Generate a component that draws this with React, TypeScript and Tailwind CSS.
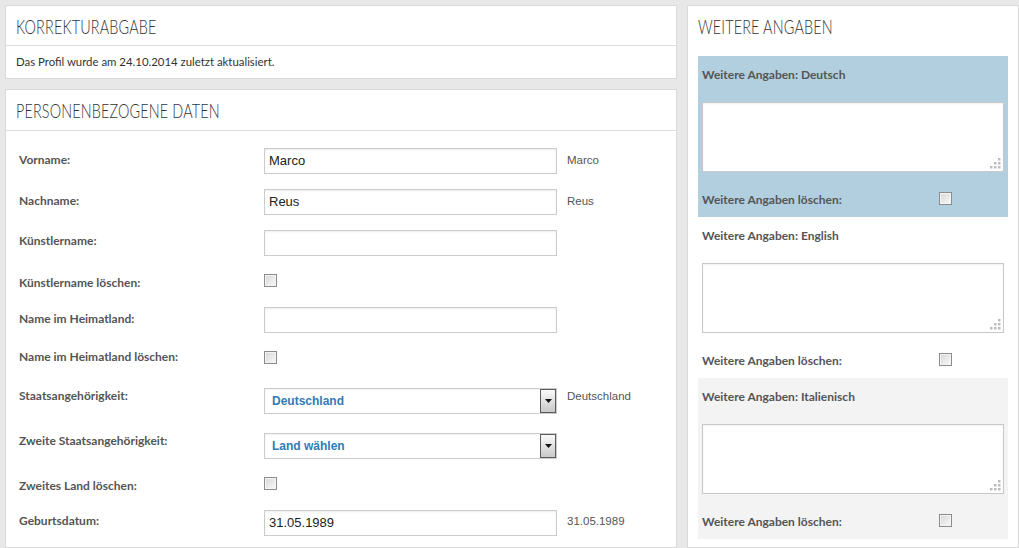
import React from "react";

const sans = { fontFamily: "Lato, 'Noto Sans', sans-serif" };

function Heading({ children }: { children: React.ReactNode }) {
  return (
    <div className="inline-block origin-left scale-x-[0.72] font-['Lato',sans-serif] text-[20px] font-light leading-none tracking-[0.2px] text-[#333] whitespace-nowrap">
      {children}
    </div>
  );
}

function Checkbox() {
  return (
    <div className="h-[13px] w-[13px] border border-[#8c8c8c] bg-gradient-to-br from-[#d6d6d6] to-[#fafafa] shadow-[inset_0_0_0_1px_#f4f4f4]" />
  );
}

function TextInput({ value }: { value?: string }) {
  return (
    <div className="flex h-[26px] w-[293px] items-center border border-[#cccccc] bg-white pl-[4px] font-['Liberation_Sans',Arial,sans-serif] text-[13px] text-[#222] shadow-[inset_0_1px_2px_rgba(0,0,0,0.08)]">
      {value}
    </div>
  );
}

function Select({ value }: { value: string }) {
  return (
    <div className="flex h-[26px] w-[293px] items-center border border-[#cccccc] bg-white pl-[7px] shadow-[inset_0_1px_2px_rgba(0,0,0,0.06)]">
      <span className="flex-1 font-['Liberation_Sans',Arial,sans-serif] text-[12px] font-bold text-[#2f7cb6]">{value}</span>
      <div className="flex h-[24px] w-[16px] items-start justify-center border border-[#5a5a5a] bg-gradient-to-b from-[#fafafa] to-[#c9c9c9] pt-[9px]">
        <svg width="7" height="4" viewBox="0 0 7 4">
          <path d="M0 0 H7 L3.5 4 Z" fill="#111" />
        </svg>
      </div>
    </div>
  );
}

function Label({ children, pt }: { children: React.ReactNode; pt: string }) {
  return (
    <div className={`w-[245px] shrink-0 text-[12px] font-bold leading-[14px] text-[#555] ${pt}`} style={sans}>
      {children}
    </div>
  );
}

function Value({ children, pt }: { children?: React.ReactNode; pt: string }) {
  return (
    <div className={`ml-[10px] font-['Liberation_Sans',Arial,sans-serif] text-[11.5px] leading-[14px] text-[#555] ${pt}`}>
      {children}
    </div>
  );
}

function Grip() {
  return (
    <svg className="absolute bottom-[2px] right-[2px]" width="11" height="11" viewBox="0 0 11 11">
      {[
        [8, 0],
        [4, 4],
        [8, 4],
        [0, 8],
        [4, 8],
        [8, 8],
      ].map(([x, y], i) => (
        <rect key={i} x={x} y={y} width="2.5" height="2.5" fill="#bdbdbd" />
      ))}
    </svg>
  );
}

function InfoBlock({ title, bg }: { title: string; bg: string }) {
  return (
    <div className={`h-[161px] px-[4px] pt-[12px] ${bg}`} style={sans}>
      <div className="text-[12px] font-bold leading-[14px] text-[#555]">{title}</div>
      <div className="relative mt-[20px] h-[70px] w-[302px] border border-[#c8c8c8] bg-white shadow-[inset_0_1px_2px_rgba(0,0,0,0.06)]">
        <Grip />
      </div>
      <div className="mt-[21px] flex items-start">
        <div className="w-[237px] text-[12px] font-bold leading-[14px] text-[#555]">Weitere Angaben löschen:</div>
        <div className="-mt-[1px]">
          <Checkbox />
        </div>
      </div>
    </div>
  );
}

export default function App() {
  return (
    <div className="flex h-[548px] w-[1019px] gap-[10px] overflow-hidden bg-[#e8e8e8] pl-[5px] pt-[5px]">
      <div className="flex w-[672px] shrink-0 flex-col gap-[10px]">
        <div className="h-[74px] border border-[#dadada] bg-white">
          <div className="h-[40px] border-b border-[#dcdcdc] pl-[10px] pt-[10px]">
            <Heading>KORREKTURABGABE</Heading>
          </div>
          <div className="pl-[10px] pt-[9px] text-[11.4px] leading-[14px] text-[#333]" style={sans}>
            Das Profil wurde am 24.10.2014 zuletzt aktualisiert.
          </div>
        </div>
        <div className="flex-1 border border-[#dadada] bg-white">
          <div className="h-[41px] border-b border-[#dcdcdc] pl-[10px] pt-[10px]">
            <Heading>PERSONENBEZOGENE DATEN</Heading>
          </div>
          <div className="pl-[13px] pt-[17px]">
            <div className="flex items-start">
              <Label pt="pt-[5px]">Vorname:</Label>
              <TextInput value="Marco" />
              <Value pt="pt-[5px]">Marco</Value>
            </div>
            <div className="mt-[15px] flex items-start">
              <Label pt="pt-[5px]">Nachname:</Label>
              <TextInput value="Reus" />
              <Value pt="pt-[5px]">Reus</Value>
            </div>
            <div className="mt-[15px] flex items-start">
              <Label pt="pt-[4px]">Künstlername:</Label>
              <TextInput />
            </div>
            <div className="mt-[15px] flex h-[26px] items-start">
              <Label pt="pt-[5px]">Künstlername löschen:</Label>
              <div className="pt-[3px]">
                <Checkbox />
              </div>
            </div>
            <div className="mt-[10px] flex items-start">
              <Label pt="pt-[5px]">Name im Heimatland:</Label>
              <TextInput />
            </div>
            <div className="mt-[15px] flex h-[26px] items-start">
              <Label pt="pt-[2px]">Name im Heimatland löschen:</Label>
              <div className="pt-[3px]">
                <Checkbox />
              </div>
            </div>
            <div className="mt-[14px] flex items-start">
              <Label pt="pt-[1px]">Staatsangehörigkeit:</Label>
              <Select value="Deutschland" />
              <Value pt="pt-[1px]">Deutschland</Value>
            </div>
            <div className="mt-[19px] flex items-start">
              <Label pt="pt-[1px]">Zweite Staatsangehörigkeit:</Label>
              <Select value="Land wählen" />
            </div>
            <div className="mt-[15px] flex h-[26px] items-start">
              <Label pt="pt-[5px]">Zweites Land löschen:</Label>
              <div className="pt-[3px]">
                <Checkbox />
              </div>
            </div>
            <div className="mt-[10px] flex items-start">
              <Label pt="pt-[4px]">Geburtsdatum:</Label>
              <TextInput value="31.05.1989" />
              <Value pt="pt-[4px]">31.05.1989</Value>
            </div>
          </div>
        </div>
      </div>
      <div className="w-[332px] shrink-0 border border-[#dadada] bg-white">
        <div className="h-[50px] pl-[10px] pt-[10px]">
          <Heading>WEITERE ANGABEN</Heading>
        </div>
        <div className="ml-[10px] w-[310px]">
          <InfoBlock title="Weitere Angaben: Deutsch" bg="bg-[#b2cfdf]" />
          <InfoBlock title="Weitere Angaben: English" bg="bg-white" />
          <InfoBlock title="Weitere Angaben: Italienisch" bg="bg-[#f3f3f3]" />
        </div>
      </div>
    </div>
  );
}
